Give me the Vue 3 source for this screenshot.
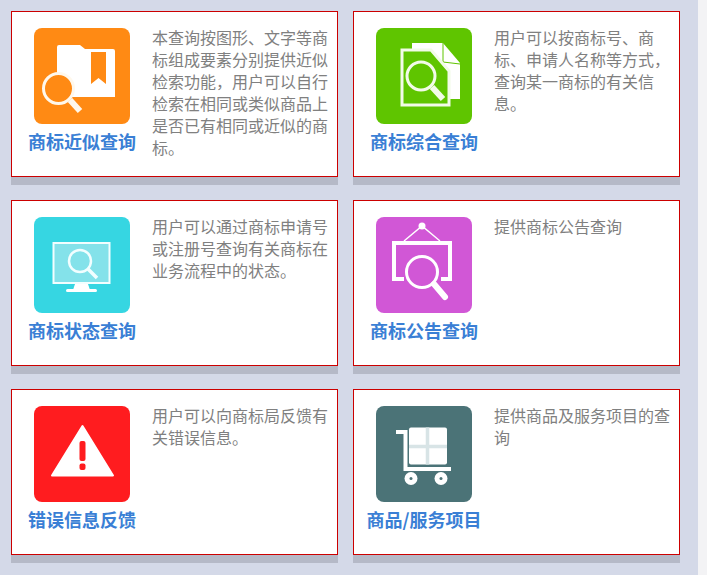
<script setup>
const items = [
  {
    key: "similar",
    color: "#ff8a14",
    title: "商标近似查询",
    text: "本查询按图形、文字等商标组成要素分别提供近似检索功能，用户可以自行检索在相同或类似商品上是否已有相同或近似的商标。",
  },
  {
    key: "general",
    color: "#5fc500",
    title: "商标综合查询",
    text: "用户可以按商标号、商标、申请人名称等方式，查询某一商标的有关信息。",
  },
  {
    key: "status",
    color: "#36d6e2",
    title: "商标状态查询",
    text: "用户可以通过商标申请号或注册号查询有关商标在业务流程中的状态。",
  },
  {
    key: "notice",
    color: "#d157d6",
    title: "商标公告查询",
    text: "提供商标公告查询",
  },
  {
    key: "error",
    color: "#ff1c1f",
    title: "错误信息反馈",
    text: "用户可以向商标局反馈有关错误信息。",
  },
  {
    key: "goods",
    color: "#4b7377",
    title: "商品/服务项目",
    text: "提供商品及服务项目的查询",
  },
];
</script>

<template>
  <div class="page">
    <main class="content">
      <section v-for="item in items" :key="item.key" class="card">
        <div class="card-left">
          <div class="icon" :style="{ backgroundColor: item.color }">
            <svg viewBox="0 0 96 96" width="96" height="96">
              <g v-if="item.key === 'similar'">
                <path d="M23 69V19a2 2 0 0 1 2-2h21l5 4h28a2 2 0 0 1 2 2v46z" fill="#fff" />
                <path d="M57 24h15v32l-7.500-6-7.500 6z" :fill="item.color" />
                <circle cx="24.500" cy="60.500" r="15" :fill="item.color" stroke="#fff8ec" stroke-width="3" />
                <path d="M36 72l10 11" stroke="#fff8ec" stroke-width="6" />
              </g>
              <g v-else-if="item.key === 'general'">
                <path d="M36 15h31l17 20v36H36z" fill="#fff" />
                <path d="M67 15v19l17 2" fill="none" :stroke="item.color" stroke-width="1" />
                <path d="M26 22h29l18 21v34H26z" :fill="item.color" stroke="#f2fbe8" stroke-width="3" />
                <circle cx="45" cy="48" r="14" fill="none" stroke="#f2fbe8" stroke-width="3" />
                <path d="M56 59l11 12" stroke="#f2fbe8" stroke-width="6" />
              </g>
              <g v-else-if="item.key === 'status'">
                <rect x="19.500" y="26" width="56" height="40" fill="#84e2ea" stroke="#f2feff" stroke-width="2" />
                <path d="M41 67h13l2 6H39z" fill="#fff" />
                <rect x="32" y="72" width="31" height="3" rx="1.500" fill="#fff" />
                <circle cx="46" cy="44" r="11" fill="none" stroke="#f2feff" stroke-width="2.500" />
                <path d="M54 52l9 9" stroke="#f2feff" stroke-width="3.500" />
              </g>
              <g v-else-if="item.key === 'notice'">
                <circle cx="46" cy="9" r="3.500" fill="#fff" />
                <path d="M28 24L46 9l18 15" fill="none" stroke="#fff" stroke-width="1.500" />
                <path d="M28 62H18V26h56v36H65" fill="none" stroke="#fff" stroke-width="4" />
                <circle cx="46" cy="55" r="15.500" fill="none" stroke="#fff" stroke-width="3" />
                <path d="M58 67l11 13" stroke="#fff" stroke-width="6" stroke-linecap="round" />
              </g>
              <g v-else-if="item.key === 'error'">
                <path d="M48.500 20L79 69.500H18z" fill="#fff" stroke="#fff" stroke-width="2" stroke-linejoin="round" />
                <rect x="45.500" y="35" width="6" height="20" rx="2" :fill="item.color" />
                <rect x="45.500" y="57.500" width="6" height="6.500" rx="2" :fill="item.color" />
              </g>
              <g v-else>
                <path d="M20 26h9.500v37H75" fill="none" stroke="#fff" stroke-width="4" />
                <rect x="33" y="21.500" width="38" height="37" rx="2" fill="#fff" />
                <path d="M51.500 21.500v37M33 40.500h38" stroke="#d8e4e6" stroke-width="3.500" />
                <circle cx="35" cy="72.500" r="6.500" fill="#fff" />
                <circle cx="65" cy="72.500" r="6.500" fill="#fff" />
                <circle cx="35" cy="72.500" r="1.500" :fill="item.color" />
                <circle cx="65" cy="72.500" r="1.500" :fill="item.color" />
              </g>
            </svg>
          </div>
          <h3 class="title">{{ item.title }}</h3>
        </div>
        <p class="text">{{ item.text }}</p>
      </section>
    </main>
  </div>
</template>

<style>
body {
  background: #f3f3f5;
}
</style>

<style scoped>
.page {
  width: 707px;
  height: 575px;
  overflow: hidden;
  font-family: "Noto Sans CJK SC", "Liberation Sans", sans-serif;
}

.content {
  display: grid;
  grid-template-columns: 327px 327px;
  grid-auto-rows: 166px;
  column-gap: 15px;
  row-gap: 23px;
  box-sizing: border-box;
  width: 698px;
  height: 575px;
  padding: 11px 0 0 11px;
  background: #d4d9e8;
}

.card {
  display: flex;
  box-sizing: border-box;
  border: 1px solid #cc0000;
  background: #fff;
  box-shadow: 0 8px 0 #b5b9c7;
}

.card-left {
  display: flex;
  flex-direction: column;
  align-items: center;
  flex: 0 0 140px;
  padding-top: 16px;
}

.icon {
  width: 96px;
  height: 96px;
  border-radius: 8px;
}

.icon svg {
  display: block;
}

.title {
  margin: 4px 0 0;
  font-size: 18px;
  font-weight: 700;
  line-height: 26px;
  white-space: nowrap;
  color: #3a7fd5;
}

.text {
  width: 178px;
  margin: 14px 0 0;
  font-size: 16px;
  line-height: 22px;
  color: #808080;
}
</style>
